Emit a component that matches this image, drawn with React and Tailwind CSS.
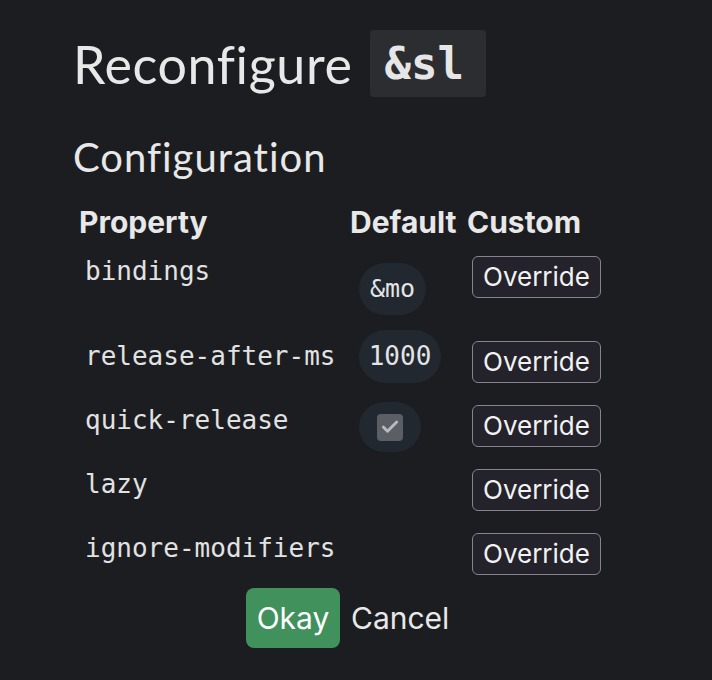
import { Check } from 'lucide-react';

const sans = "font-['Inter','Liberation_Sans',sans-serif]";
const mono = "font-['DejaVu_Sans_Mono','Liberation_Mono',monospace]";

function OverrideButton() {
  return (
    <button className={`${sans} h-[42px] w-[129px] rounded-[6px] border-[1.5px] border-[#85838e] bg-[#24232b] text-[26px] leading-none text-[#f2f2f2]`}>
      Override
    </button>
  );
}

function Pill({ children, className = '' }) {
  return (
    <div className={`flex items-center justify-center rounded-full bg-[#212830] ${className}`}>
      {children}
    </div>
  );
}

export default function App() {
  // rows of the property table
  const rows = [
    {
      name: 'bindings',
      h: 'h-[85px]',
      def: (
        <Pill className="mt-[13px] h-[52px] w-[67px]">
          <span className={`${mono} text-[25px] text-[#e4e4e4]`}>&amp;mo</span>
        </Pill>
      ),
    },
    {
      name: 'release-after-ms',
      h: 'h-[64px]',
      def: (
        <Pill className="-mt-[5px] h-[53px] w-[82px]">
          <span className={`${mono} text-[26px] text-[#e4e4e4]`}>1000</span>
        </Pill>
      ),
    },
    {
      name: 'quick-release',
      h: 'h-[64px]',
      def: (
        <Pill className="mt-[3px] h-[50px] w-[62px]">
          <span className="flex h-[27px] w-[26px] items-center justify-center rounded-[4px] bg-[#5c5e66]">
            <Check size={20} strokeWidth={3.5} className="text-[#b9babe]" />
          </span>
        </Pill>
      ),
    },
    { name: 'lazy', h: 'h-[64px]', def: null },
    { name: 'ignore-modifiers', h: 'h-[64px]', def: null },
  ];

  return (
    <div className="min-h-[680px] w-full bg-[#1c1d20] pl-[73px] pt-[30px] text-[#e8e8e8]">
      <h1 className="flex items-center gap-[18px]">
        <span className="font-['Lato',sans-serif] text-[52px] leading-none tracking-[0.6px]">Reconfigure</span>
        <code className={`${mono} flex h-[67px] w-[116px] items-center rounded-[4px] bg-[#2c2d31] pl-[14px] text-[44px] font-bold leading-none text-[#e6e6e6]`}>
          &amp;sl
        </code>
      </h1>

      <h2 className="mt-[38px] font-['Lato',sans-serif] text-[40px] leading-[44px] tracking-[1px]">Configuration</h2>

      <div className="ml-[6px] mt-[23px]">
        <div className={`${sans} flex h-[40px] items-center text-[30px] font-bold`}>
          <div className="w-[271px]">Property</div>
          <div className="w-[117px]">Default</div>
          <div>Custom</div>
        </div>

        <div className="mt-[8px]">
          {rows.map((r) => (
            <div key={r.name} className={`flex items-start ${r.h}`}>
              <div className={`${mono} mt-[5px] w-[271px] pl-[6px] text-[26px] leading-[32px] text-[#e2e2e2]`}>{r.name}</div>
              <div className="w-[122px] pl-[9px]">{r.def}</div>
              <div className="mt-[6px]">
                <OverrideButton />
              </div>
            </div>
          ))}
        </div>

        <div className={`${sans} ml-[167px] -mt-[3px] flex items-center gap-[11px]`}>
          <button className="h-[60px] w-[94px] rounded-[8px] bg-[#40915b] text-[30px] text-white">Okay</button>
          <button className="text-[30px] text-[#e8e8e8]">Cancel</button>
        </div>
      </div>
    </div>
  );
}
